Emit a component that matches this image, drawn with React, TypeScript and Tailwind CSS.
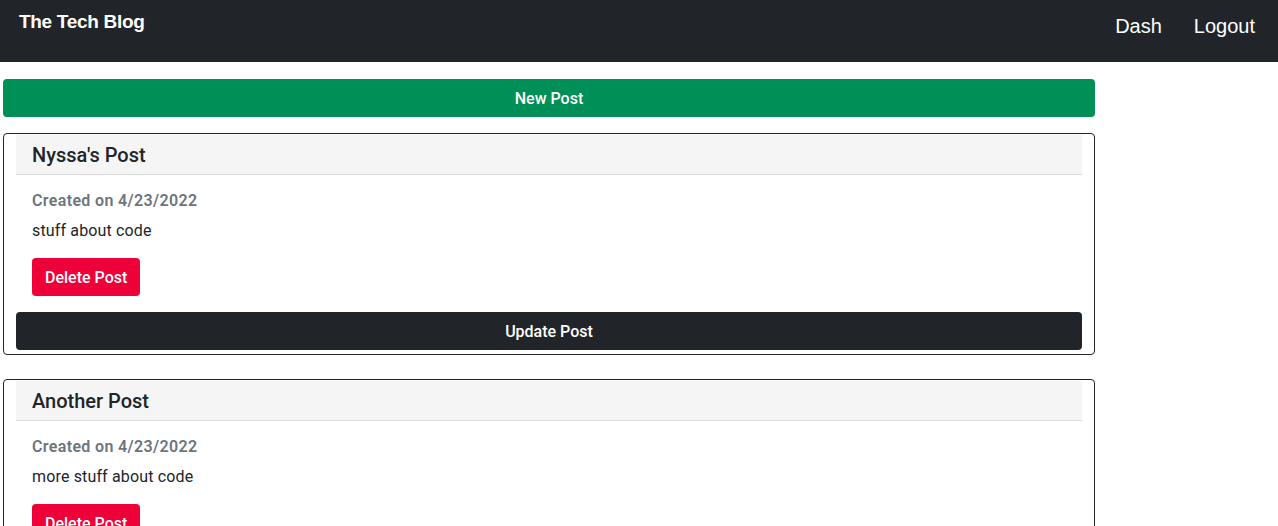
import React from 'react';

interface Post {
  title: string;
  date: string;
  body: string;
}

const posts: Post[] = [
  { title: "Nyssa's Post", date: '4/23/2022', body: 'stuff about code' },
  { title: 'Another Post', date: '4/23/2022', body: 'more stuff about code' },
];

function PostCard({ post }: { post: Post }) {
  return (
    <div className="rounded border border-[#212529] px-3 pt-px pb-1">
      <div className="flex h-10 items-center border-b border-[#dcdcdc] bg-[#f5f5f5] px-4">
        <h2 className="text-[20px] font-medium text-[#212529]">{post.title}</h2>
      </div>
      <div className="px-4 pt-[14px]">
        <p className="mb-[6px] text-base leading-6 font-semibold tracking-[0.35px] text-[#6c757d]">
          Created on {post.date}
        </p>
        <p className="text-base leading-6 tracking-[0.15px] text-[#212529]">{post.body}</p>
        <button className="mt-[15px] h-[38px] rounded bg-[#ee0038] px-[13px] pt-[2px] text-base font-medium text-white">
          Delete Post
        </button>
      </div>
      <button className="mt-4 h-[38px] w-full rounded bg-[#212529] pt-[2px] text-base font-medium text-white">
        Update Post
      </button>
    </div>
  );
}

export default function App() {
  return (
    <div className="min-h-screen bg-white font-['Roboto',sans-serif]">
      <nav className="flex h-[62px] items-start justify-between bg-[#212529] pl-[19px] pr-[23px]">
        <a className="mt-[8px] font-['Liberation_Sans',sans-serif] text-[19px] font-bold tracking-[-0.3px] text-white">
          The Tech Blog
        </a>
        <div className="mt-[11px] flex gap-8 font-['Liberation_Sans',sans-serif] text-[20px] text-white">
          <a>Dash</a>
          <a>Logout</a>
        </div>
      </nav>
      <main className="ml-[3px] mt-[17px] w-[1092px]">
        <button className="h-[38px] w-full rounded bg-[#008f56] pt-[2px] text-base font-medium text-white">
          New Post
        </button>
        <div className="mt-4 flex flex-col gap-6">
          {posts.map((p) => (
            <PostCard key={p.title} post={p} />
          ))}
        </div>
      </main>
    </div>
  );
}
